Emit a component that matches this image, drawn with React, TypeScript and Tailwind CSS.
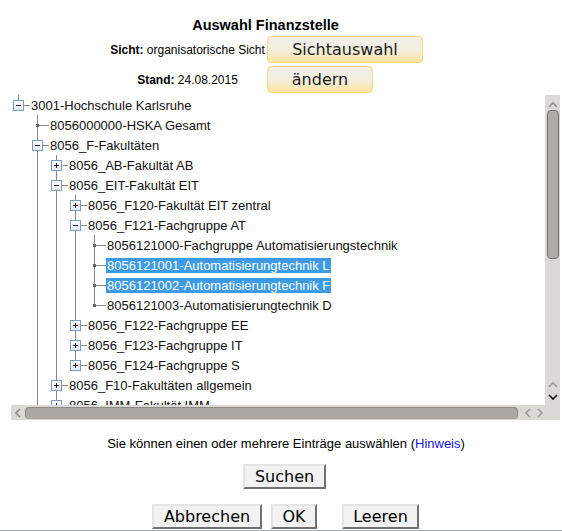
import React from "react";

type Kind = "open" | "closed" | "leaf";

interface TreeNode {
  label: string;
  kind: Kind;
  selected?: boolean;
  children?: TreeNode[];
}

interface Row {
  label: string;
  kind: Kind;
  selected?: boolean;
  guides: boolean[];
  above: boolean;
  last: boolean;
}

const tree: TreeNode[] = [
  {
    label: "3001-Hochschule Karlsruhe",
    kind: "open",
    children: [
      { label: "8056000000-HSKA Gesamt", kind: "leaf" },
      {
        label: "8056_F-Fakultäten",
        kind: "open",
        children: [
          { label: "8056_AB-Fakultät AB", kind: "closed" },
          {
            label: "8056_EIT-Fakultät EIT",
            kind: "open",
            children: [
              { label: "8056_F120-Fakultät EIT zentral", kind: "closed" },
              {
                label: "8056_F121-Fachgruppe AT",
                kind: "open",
                children: [
                  { label: "8056121000-Fachgruppe Automatisierungstechnik", kind: "leaf" },
                  { label: "8056121001-Automatisierungtechnik L", kind: "leaf", selected: true },
                  { label: "8056121002-Automatisierungtechnik F", kind: "leaf", selected: true },
                  { label: "8056121003-Automatisierungtechnik D", kind: "leaf" },
                ],
              },
              { label: "8056_F122-Fachgruppe EE", kind: "closed" },
              { label: "8056_F123-Fachgruppe IT", kind: "closed" },
              { label: "8056_F124-Fachgruppe S", kind: "closed" },
            ],
          },
          { label: "8056_F10-Fakultäten allgemein", kind: "closed" },
          { label: "8056_IMM-Fakultät IMM", kind: "closed" },
          { label: "8056_IWI-Fakultät IWI", kind: "closed" },
        ],
      },
      { label: "8056_V-Verwaltung", kind: "closed" },
    ],
  },
];

function flatten(nodes: TreeNode[], guides: boolean[], out: Row[], isRoot: boolean) {
  nodes.forEach((n, i) => {
    const last = i === nodes.length - 1;
    out.push({
      label: n.label,
      kind: n.kind,
      selected: n.selected,
      guides,
      above: true,
      last: isRoot ? true : last,
    });
    if (n.kind === "open" && n.children) {
      flatten(n.children, [...guides, isRoot ? false : !last], out, false);
    }
  });
  return out;
}

const rows = flatten(tree, [], [], true).slice(0, 16);

const LINE = "bg-[#888888]";

function ToggleBox({ open }: { open: boolean }) {
  return (
    <div className="absolute left-[2px] top-[5px] h-[11px] w-[11px] border border-[#7d9cc9] bg-gradient-to-b from-white to-[#e4e9f1]">
      <div className="absolute left-[2px] top-[4px] h-px w-[5px] bg-[#222]" />
      {!open && <div className="absolute left-[4px] top-[2px] h-[5px] w-px bg-[#222]" />}
    </div>
  );
}

function TreeRow({ row }: { row: Row }) {
  return (
    <div className="flex h-5 items-center whitespace-nowrap">
      {row.guides.map((g, i) => (
        <div key={i} className="relative h-full w-[19px] shrink-0">
          {g && <div className={`absolute left-[7px] top-0 h-full w-px ${LINE}`} />}
        </div>
      ))}
      <div className="relative h-full w-[19px] shrink-0">
        {row.above && <div className={`absolute left-[7px] top-0 h-[10px] w-px ${LINE}`} />}
        {!row.last && <div className={`absolute left-[7px] top-[10px] h-[10px] w-px ${LINE}`} />}
        <div className={`absolute left-[7px] top-[10px] h-px w-[12px] ${LINE}`} />
        {row.kind === "leaf" ? (
          <div className="absolute left-[6px] top-[9px] h-[3px] w-[3px] bg-[#666]" />
        ) : (
          <ToggleBox open={row.kind === "open"} />
        )}
      </div>
      <span
        className={`px-px text-[13px] leading-[15px] ${
          row.selected ? "bg-[#3d9be6] text-white" : "text-[#111]"
        }`}
      >
        {row.label}
      </span>
    </div>
  );
}

function Chevron({ dir, className }: { dir: "up" | "down" | "left" | "right"; className?: string }) {
  const pts = {
    up: "1,6 5,2 9,6",
    down: "1,2 5,6 9,2",
    left: "6,1 2,5 6,9",
    right: "2,1 6,5 2,9",
  }[dir];
  const horizontal = dir === "left" || dir === "right";
  return (
    <svg
      width={horizontal ? 8 : 10}
      height={horizontal ? 10 : 8}
      viewBox={horizontal ? "0 0 8 10" : "0 0 10 8"}
      className={className}
    >
      <polyline points={pts} fill="none" stroke="currentColor" strokeWidth="1.6" />
    </svg>
  );
}

function YellowButton({ label, width }: { label: string; width: string }) {
  return (
    <button
      className={`${width} h-[27px] rounded-[4px] border border-[#f9d77c] bg-gradient-to-b from-[#f0efeb] via-[#f3eedf] to-[#fde5a0] text-center font-['DejaVu_Sans',sans-serif] text-[16px] leading-[25px] text-[#1c1c1c]`}
    >
      {label}
    </button>
  );
}

function GrayButton({ label, width }: { label: string; width: string }) {
  return (
    <button
      className={`${width} h-[25px] border-2 border-t-[#e4e4e4] border-l-[#e4e4e4] border-r-[#707070] border-b-[#707070] bg-[#f2f2f2] font-['DejaVu_Sans',sans-serif] text-[16px] leading-[21px] text-black`}
    >
      {label}
    </button>
  );
}

export default function App() {
  return (
    <div className="h-[531px] w-[562px] overflow-hidden bg-white font-['Liberation_Sans',Arial,sans-serif] text-black">
      {/* heading */}
      <div className="w-[531px] pt-[15px] text-center text-[14.5px] font-bold leading-[20px]">
        Auswahl Finanzstelle
      </div>

      {/* view and date */}
      <div className="ml-[108px] mt-px grid grid-cols-[159px_156px] gap-y-[3px] text-[12px]">
        <div className="flex h-[27px] items-center justify-center whitespace-nowrap">
          <b>Sicht:</b>&nbsp;organisatorische Sicht
        </div>
        <div>
          <YellowButton label="Sichtauswahl" width="w-[156px]" />
        </div>
        <div className="flex h-[27px] items-center justify-center whitespace-nowrap">
          <b>Stand:</b>&nbsp;24.08.2015
        </div>
        <div>
          <YellowButton label="ändern" width="w-[106px]" />
        </div>
      </div>

      {/* tree panel */}
      <div className="ml-[11px] mt-[2px] flex h-[325px] w-[549px]">
        <div className="flex w-[534px] flex-col">
          <div className="h-[310px] overflow-hidden">
            {rows.map((r, i) => (
              <TreeRow key={i} row={r} />
            ))}
          </div>
          <div className="flex h-[15px] items-center bg-[#dbd9d5]">
            <div className="flex w-[14px] justify-center text-[#8d8d8d]">
              <Chevron dir="left" />
            </div>
            <div className="h-[12px] w-[493px] rounded-[4px] border border-[#8e8a85] border-b-[#a5a19c] bg-[#aca8a3]" />
            <div className="ml-[6px] flex gap-[4px] text-[#9a9a9a]">
              <Chevron dir="left" />
              <Chevron dir="right" />
            </div>
          </div>
        </div>
        <div className="flex w-[15px] flex-col items-center bg-[#dbd9d5]">
          <div className="flex h-[14px] items-end text-[#8f8f8f]">
            <Chevron dir="up" />
          </div>
          <div className="mt-px h-[149px] w-[12px] rounded-[4px] border border-[#77736e] bg-[#b0aca7]" />
          <div className="flex-1" />
          <div className="flex flex-col items-center gap-[4px] pb-[19px]">
            <Chevron dir="up" className="text-[#9a9a9a]" />
            <Chevron dir="down" className="text-[#111]" />
          </div>
        </div>
      </div>

      {/* hint and actions */}
      <div className="mt-[16px] pl-[10px] text-center text-[13px] leading-[16px]">
        Sie können einen oder mehrere Einträge auswählen (<span className="text-[#1515e6]">Hinweis</span>)
      </div>
      <div className="mt-[12px] flex justify-center pl-[7px]">
        <GrayButton label="Suchen" width="w-[83px]" />
      </div>
      <div className="mt-[15px] flex justify-center gap-[9px] pl-[9px]">
        <GrayButton label="Abbrechen" width="w-[110px]" />
        <GrayButton label="OK" width="w-[46px]" />
        <div className="w-[7px]" />
        <GrayButton label="Leeren" width="w-[77px]" />
      </div>
      <div className="mt-px h-px w-full bg-[#a3abab]" />
    </div>
  );
}
